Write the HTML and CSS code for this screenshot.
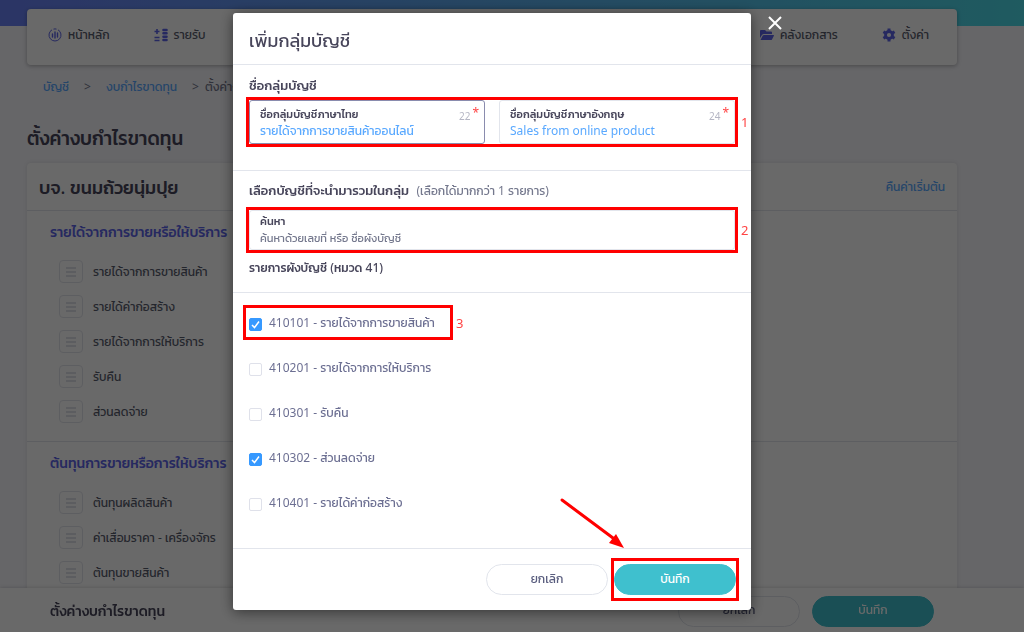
FILE: index.html
```html
<!DOCTYPE html>
<html lang="th">
<head>
    <meta charset="UTF-8">
    <meta name="viewport" content="width=device-width, initial-scale=1.0">
    <title>ตั้งค่างบกำไรขาดทุน</title>
    <link rel="stylesheet" href="styles.css">
</head>
<body>
    <svg class="sprite">
        <symbol id="bars" viewBox="0 0 12 12">
            <path d="M1 2h10M1 6h10M1 10h10" fill="none" stroke="currentColor" stroke-width="1.4"/>
        </symbol>
    </svg>

    <div class="topbar"></div>
    <div class="page">
        <nav class="menu">
            <div class="menu-group">
                <a href="#" class="menu-item">
                    <svg class="icon" viewBox="0 0 14 14" fill="none" stroke="currentColor">
                        <path d="M4 1.8A6 6 0 1 0 10 1.8" stroke-width="1"/>
                        <path d="M5.5 1.1A6 6 0 0 1 8.5 1.1" stroke-width="1"/>
                        <path d="M4.5 6v3M7 4v6M9.5 5v4" stroke-width="1.4" stroke-linecap="round"/>
                    </svg>
                    หน้าหลัก
                </a>
                <a href="#" class="menu-item">
                    <svg class="icon" viewBox="0 0 14 14" fill="none" stroke="currentColor">
                        <path d="M3 1v5M.5 3.5h5M.5 9.5h5M.5 12.5h5" stroke-width="1.6"/>
                        <path d="M9.5 2h3M9.5 5.3h3M9.5 8.7h3M9.5 12h3" stroke-width="2.6" stroke-linecap="round"/>
                    </svg>
                    รายรับ
                </a>
            </div>
            <div class="menu-group">
                <a href="#" class="menu-item">
                    <svg class="icon" viewBox="0 0 14 14" fill="currentColor">
                        <path d="M0 10V3q0-1 1-1h4l1.5 1.5H11q1 0 1 1V6H4Q2.5 6 2 7zM.5 12l2.3-4.4Q3.2 7 4 7h9.5q.7 0 .4.7L12 11.5q-.3.5-1 .5z"/>
                    </svg>
                    คลังเอกสาร
                </a>
                <a href="#" class="menu-item">
                    <svg class="icon" viewBox="0 0 14 14">
                        <circle cx="7" cy="7" r="3.5" fill="none" stroke="currentColor" stroke-width="2.8"/>
                        <path d="M7 .5V3M7 11v2.5M1.4 3.7l2.2 1.3M10.4 9l2.2 1.3M1.4 10.3l2.2-1.3M10.4 5l2.2-1.3" stroke="currentColor" stroke-width="3"/>
                    </svg>
                    ตั้งค่า
                </a>
            </div>
        </nav>

        <div class="breadcrumb">
            <a href="#">บัญชี</a>
            <span>&gt;</span>
            <a href="#">งบกำไรขาดทุน</a>
            <span>&gt;&nbsp; ตั้งค่างบกำไรขาดทุน</span>
        </div>

        <h1>ตั้งค่างบกำไรขาดทุน</h1>

        <div class="card">
            <div class="card-header">
                <h2>บจ. ขนมถ้วยนุ่มปุย</h2>
                <a href="#">คืนค่าเริ่มต้น</a>
            </div>
            <div class="group">
                <h3>รายได้จากการขายหรือให้บริการ</h3>
                <ul>
                    <li><span class="handle"><svg><use href="#bars"/></svg></span>รายได้จากการขายสินค้า</li>
                    <li><span class="handle"><svg><use href="#bars"/></svg></span>รายได้ค่าก่อสร้าง</li>
                    <li><span class="handle"><svg><use href="#bars"/></svg></span>รายได้จากการให้บริการ</li>
                    <li><span class="handle"><svg><use href="#bars"/></svg></span>รับคืน</li>
                    <li><span class="handle"><svg><use href="#bars"/></svg></span>ส่วนลดจ่าย</li>
                </ul>
            </div>
            <div class="group">
                <h3>ต้นทุนการขายหรือการให้บริการ</h3>
                <ul>
                    <li><span class="handle"><svg><use href="#bars"/></svg></span>ต้นทุนผลิตสินค้า</li>
                    <li><span class="handle"><svg><use href="#bars"/></svg></span>ค่าเสื่อมราคา - เครื่องจักร</li>
                    <li><span class="handle"><svg><use href="#bars"/></svg></span>ต้นทุนขายสินค้า</li>
                </ul>
            </div>
        </div>
    </div>

    <div class="action-bar">
        <strong>ตั้งค่างบกำไรขาดทุน</strong>
        <button type="button" class="btn">ยกเลิก</button>
        <button type="button" class="btn btn-save">บันทึก</button>
    </div>

    <div class="overlay">
        <form class="modal">
            <button type="button" class="close" aria-label="ปิด">
                <svg viewBox="0 0 14 14"><path d="M1 1l12 12M13 1L1 13" stroke="#fff" stroke-width="2"/></svg>
            </button>

            <div class="modal-title">เพิ่มกลุ่มบัญชี</div>

            <div class="section names">
                <h4>ชื่อกลุ่มบัญชี</h4>
                <div class="fields">
                    <div class="field focused">
                        <label for="name-th">ชื่อกลุ่มบัญชีภาษาไทย</label>
                        <input type="text" id="name-th" value="รายได้จากการขายสินค้าออนไลน์">
                        <span class="count">22<b>*</b></span>
                    </div>
                    <div class="field">
                        <label for="name-en">ชื่อกลุ่มบัญชีภาษาอังกฤษ</label>
                        <input type="text" id="name-en" value="Sales from online product">
                        <span class="count">24<b>*</b></span>
                    </div>
                    <div class="mark"><span>1</span></div>
                </div>
            </div>

            <div class="section search">
                <h4>เลือกบัญชีที่จะนำมารวมในกลุ่ม <small>(เลือกได้มากกว่า 1 รายการ)</small></h4>
                <div class="fields">
                    <div class="field">
                        <label for="search">ค้นหา</label>
                        <input type="text" id="search" placeholder="ค้นหาด้วยเลขที่ หรือ ชื่อผังบัญชี">
                    </div>
                    <div class="mark"><span>2</span></div>
                </div>
                <h5>รายการผังบัญชี (หมวด 41)</h5>
            </div>

            <div class="section accounts">
                <label class="account">
                    <input type="checkbox" checked>410101 - รายได้จากการขายสินค้า
                    <span class="mark"><span>3</span></span>
                </label>
                <label class="account"><input type="checkbox">410201 - รายได้จากการให้บริการ</label>
                <label class="account"><input type="checkbox">410301 - รับคืน</label>
                <label class="account"><input type="checkbox" checked>410302 - ส่วนลดจ่าย</label>
                <label class="account"><input type="checkbox">410401 - รายได้ค่าก่อสร้าง</label>
            </div>

            <div class="modal-footer">
                <button type="button" class="btn">ยกเลิก</button>
                <div class="save">
                    <button type="submit" class="btn btn-save">บันทึก</button>
                    <div class="mark"></div>
                    <svg class="arrow" viewBox="0 0 66 52">
                        <path d="M3 3L54 41" stroke="#f00" stroke-width="3" stroke-linecap="round"/>
                        <path d="M65 51L50 46L57 37z" fill="#f00"/>
                    </svg>
                </div>
            </div>
        </form>
    </div>
</body>
</html>
```

FILE: styles.css
```css
* {
    box-sizing: border-box;
}
body {
    margin: 0;
    height: 100vh;
    overflow: hidden;
    background-color: #f7f7fc;
    color: #48465b;
    font-family: "Noto Sans", Kanit, Prompt, sans-serif;
    font-size: 12px;
    line-height: 20px;
}
h1, h2, h3, h4, h5 {
    margin: 0;
    font-weight: 500;
}
ul {
    margin: 0;
    padding: 0;
}
a {
    color: #5aa9ff;
    text-decoration: none;
}
button, input {
    font-family: inherit;
}
.sprite {
    display: none;
}
.topbar {
    height: 26px;
    background: linear-gradient(to right, #6a80f5, #4cdce8);
}
.page {
    margin: -17px 67px 0 27px;
}

/* menu */
.menu {
    display: flex;
    justify-content: space-between;
    height: 56px;
    padding: 16px 28px 0 21px;
    background-color: #fff;
    border-radius: 4px;
    box-shadow: 0 1px 4px rgba(0, 0, 0, 0.3);
}
.menu-group {
    display: flex;
    gap: 44px;
}
.menu-item {
    display: flex;
    align-items: center;
    gap: 6px;
    height: 20px;
    color: #595d6e;
}
.icon {
    width: 14px;
    height: 14px;
    color: #5d65e8;
}
.breadcrumb {
    display: flex;
    gap: 15px;
    padding: 12px 16px;
}
.breadcrumb span {
    color: #74788d;
}
h1 {
    margin: 14px 0 10px;
    font-size: 19px;
    line-height: 30px;
}

/* statement card */
.card {
    background-color: #fff;
    border-radius: 4px;
    box-shadow: 0 0 4px rgba(0, 0, 0, 0.1);
}
.card-header {
    display: flex;
    justify-content: space-between;
    align-items: center;
    height: 48px;
    padding: 0 12px;
    border-bottom: 1px solid #e2e5ec;
}
.card-header h2 {
    font-size: 18px;
}
.group {
    padding: 11px 23px 12px;
    border-bottom: 1px solid #e2e5ec;
}
.group h3 {
    margin-bottom: 12px;
    color: #5d65e8;
    font-size: 14px;
}
.group li {
    display: flex;
    align-items: center;
    gap: 10px;
    height: 35px;
    padding-left: 9px;
    color: #595d6e;
}
.handle {
    display: flex;
    align-items: center;
    justify-content: center;
    width: 24px;
    height: 23px;
    border: 1px solid #e2e5ec;
    border-radius: 4px;
    color: #d5d7e2;
}
.handle svg {
    width: 12px;
    height: 12px;
}
.action-bar {
    position: fixed;
    left: 0;
    right: 0;
    bottom: 0;
    display: flex;
    align-items: center;
    gap: 12px;
    height: 44px;
    padding: 2px 90px 0 50px;
    background-color: #fff;
    box-shadow: 0 0 4px rgba(0, 0, 0, 0.2);
}
.action-bar strong {
    flex: 1;
    font-size: 14px;
    font-weight: 500;
}
.btn {
    width: 122px;
    height: 31px;
    padding-bottom: 3px;
    border: 1px solid #e2e5ec;
    border-radius: 16px;
    background-color: #fff;
    color: #595d7e;
    font-size: 12px;
}
.btn-save {
    border-color: #3fc0ce;
    background-color: #3fc0ce;
    color: #fff;
}

/* modal */
.overlay {
    position: fixed;
    top: 0;
    right: 0;
    bottom: 0;
    left: 0;
    padding: 13px 40px 0 0;
    background-color: rgba(0, 0, 0, 0.59);
}
.modal {
    position: relative;
    max-width: 518px;
    margin: 0 auto;
    background-color: #fff;
    border-radius: 3px;
    box-shadow: 0 2px 14px rgba(0, 0, 0, 0.5);
}
.close {
    position: absolute;
    top: 3px;
    right: -31px;
    width: 14px;
    height: 14px;
    padding: 0;
    border: 0;
    background: none;
}
.close svg {
    display: block;
}
.modal-title {
    height: 52px;
    padding: 0 16px;
    border-bottom: 1px solid #e2e5ec;
    font-size: 18px;
    line-height: 54px;
}
.section {
    padding: 0 16px;
    border-bottom: 1px solid #e2e5ec;
}
.section h4 {
    font-size: 13px;
}
.section small {
    margin-left: 4px;
    color: #74788d;
    font-size: 12px;
    font-weight: 400;
}
.section h5 {
    margin-top: 8px;
    font-size: 12px;
}
.names {
    padding-top: 10px;
    padding-bottom: 26px;
}
.search {
    padding-top: 9px;
    padding-bottom: 14px;
}
.fields {
    position: relative;
    display: flex;
    gap: 14px;
    margin-top: 5px;
}
.search .fields {
    margin-top: 9px;
}
.field {
    position: relative;
    flex: 1;
    height: 44px;
    padding: 4px 10px 0;
    border: 1px solid #e2e5ec;
    border-radius: 3px;
}
.search .field {
    height: 40px;
    padding-top: 1px;
}
.field.focused {
    border-color: #8a8cae;
}
.field label {
    display: block;
    font-size: 11px;
    font-weight: 500;
    line-height: 17px;
}
.field input {
    display: block;
    width: 100%;
    height: 17px;
    padding: 0;
    border: 0;
    outline: 0;
    background: none;
    color: #5aa9ff;
    font-size: 12px;
}
.field input::placeholder {
    color: #74788d;
    font-size: 11px;
}
.count {
    position: absolute;
    top: 2px;
    right: 5px;
    color: #b5b6c4;
    font-size: 10px;
}
.count b {
    margin-left: 2px;
    color: #f44;
    font-size: 12px;
    font-weight: 400;
    vertical-align: 3px;
}
.accounts {
    padding-top: 7px;
    padding-bottom: 23px;
}
.account {
    position: relative;
    display: flex;
    align-items: center;
    width: fit-content;
    height: 45px;
    color: #6c6f92;
    font-size: 12px;
}
.account input {
    appearance: none;
    width: 13px;
    height: 13px;
    margin: 3px 7px 0 0;
    border: 1px solid #dfe1ea;
    border-radius: 2px;
}
.account input:checked {
    border-color: #3699ff;
    background: #3699ff url('data:image/svg+xml,<svg xmlns="http://www.w3.org/2000/svg" viewBox="0 0 12 12"><path d="M2.5 6.5L5 9l4.5-6" fill="none" stroke="white" stroke-width="1.5"/></svg>') center / 12px;
}
.modal-footer {
    display: flex;
    justify-content: flex-end;
    gap: 6px;
    padding: 15px;
}
.save {
    position: relative;
    display: flex;
}

/* step marks drawn over the form */
.mark {
    position: absolute;
    top: -3px;
    right: -3px;
    bottom: -3px;
    left: -3px;
    border: 3px solid #f00;
    pointer-events: none;
}
.mark span {
    position: absolute;
    top: 50%;
    left: 100%;
    margin: -10px 0 0 6px;
    color: #f44;
    font-size: 13px;
}
.account .mark {
    top: 5px;
    right: -18px;
    bottom: 5px;
    left: -6px;
}
.save .mark {
    top: -6px;
    bottom: -6px;
}
.arrow {
    position: absolute;
    right: 111px;
    bottom: 46px;
    width: 66px;
    height: 52px;
}
```
